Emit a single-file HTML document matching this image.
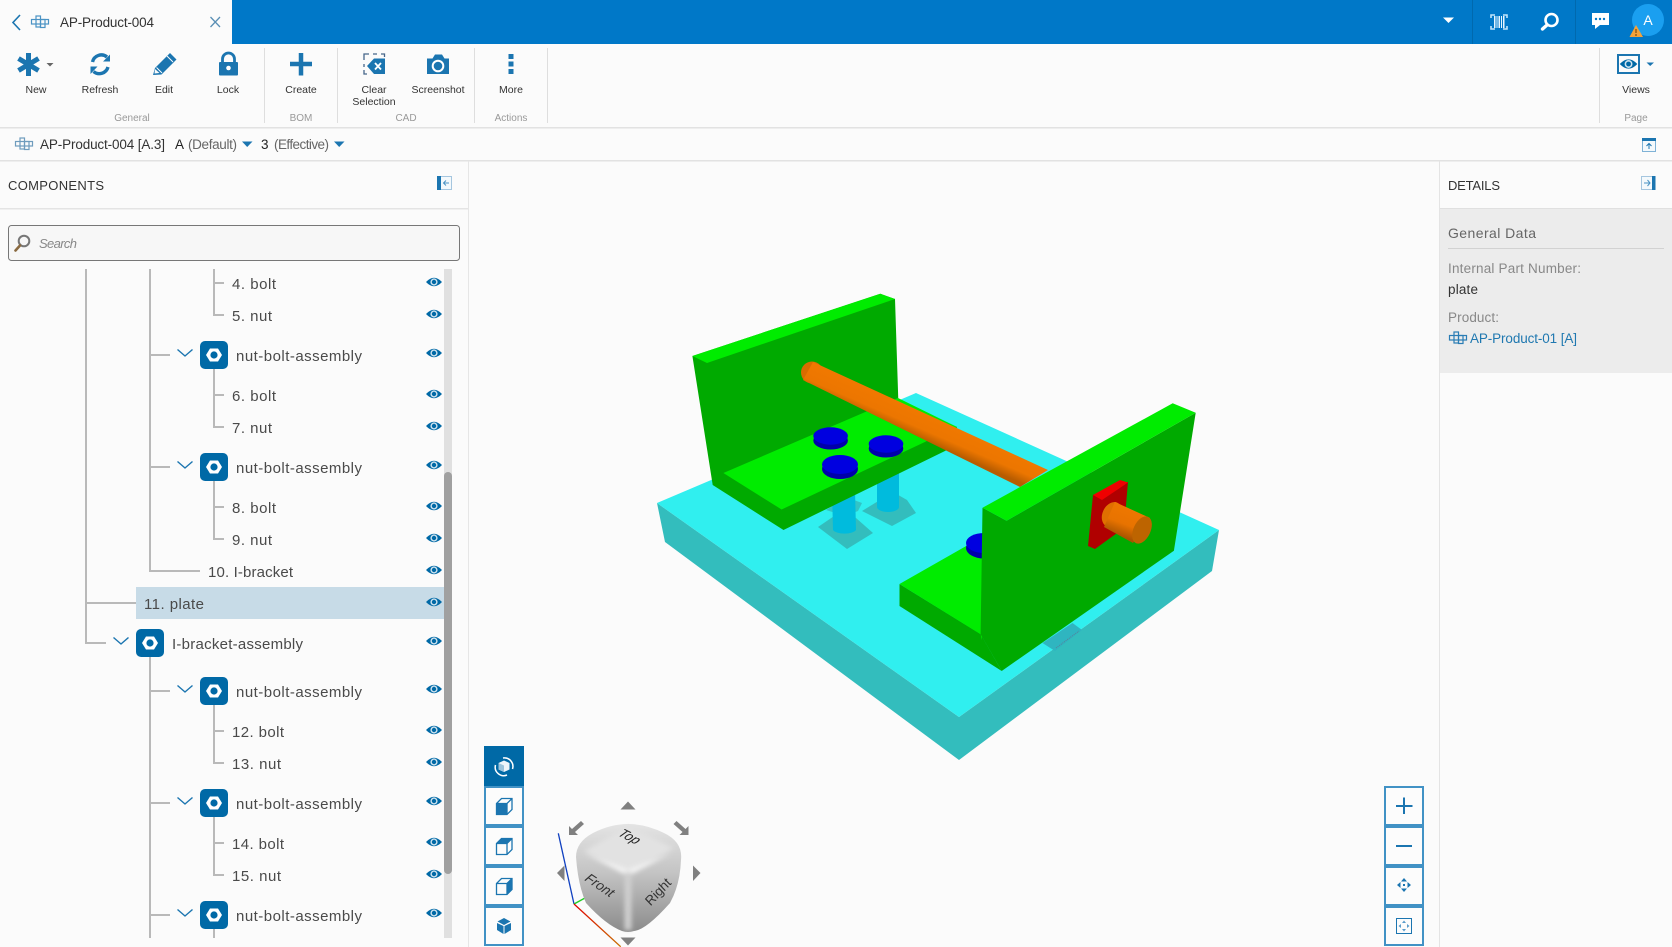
<!DOCTYPE html>
<html><head><meta charset="utf-8"><title>AP-Product-004</title>
<style>
html,body{margin:0;padding:0;width:1672px;height:947px;overflow:hidden;background:#fbfbfb}
svg{display:block}
text{font-family:"Liberation Sans",sans-serif}
.t{font-size:15px;fill:#4a4a4a}
.tb{font-size:10.5px;fill:#333;text-anchor:middle}
.gr{font-size:10px;fill:#999;text-anchor:middle}
.ln{stroke:#b9b9b9;stroke-width:2;fill:none}
.ic{fill:#1b75b0}
.ns{fill:none;stroke:#1b75b0}
.btn{fill:#fcfcfc;stroke:#4192c5;stroke-width:2}
</style></head><body>
<svg width="1672" height="947" viewBox="0 0 1672 947" xmlns="http://www.w3.org/2000/svg">
<defs>
<g id="eye"><path d="M-8 0Q0-8.500 8 0Q0 8.500-8 0Z" fill="#0069a6"/><circle r="3.600" fill="#cfe3ef"/><circle r="2.200" fill="#0069a6"/></g>
<g id="hex"><rect x="-14" y="-14" width="28" height="28" rx="5" fill="#0069a6"/><path d="M-8 0L-4-6.500H4L8 0L4 6.500H-4Z" fill="#fff"/><circle r="3.600" fill="#0069a6"/></g>
<polyline id="chev" points="-7.500,-3.500 0,3 7.500,-3.500" fill="none" stroke="#1b75b0" stroke-width="1.400"/>
<g id="prod" fill="none" stroke-width="1.200"><rect x="-8.500" y="-2.500" width="17" height="4.500"/><rect x="-4" y="-6" width="4.500" height="11"/><rect x="0.500" y="-2.500" width="4.500" height="8"/></g>
<linearGradient id="rod" gradientUnits="userSpaceOnUse" x1="930" y1="416" x2="920" y2="439"><stop offset="0" stop-color="#f07800"/><stop offset=".6" stop-color="#ec7600"/><stop offset="1" stop-color="#b85c00"/></linearGradient>
<linearGradient id="stub" gradientUnits="userSpaceOnUse" x1="1127" y1="508" x2="1117" y2="535"><stop offset="0" stop-color="#ee7700"/><stop offset=".55" stop-color="#e87300"/><stop offset="1" stop-color="#a85400"/></linearGradient>
<linearGradient id="cubeg" x1="0" y1="0" x2="0" y2="1"><stop offset="0" stop-color="#e4e4e4"/><stop offset=".45" stop-color="#c4c4c4"/><stop offset="1" stop-color="#8b8b8b"/></linearGradient>
<linearGradient id="axr" x1="0" y1="0" x2="1" y2="1"><stop offset="0" stop-color="#e00000"/><stop offset="1" stop-color="#c87000"/></linearGradient>
<filter id="bl" x="-20%" y="-20%" width="140%" height="140%"><feGaussianBlur stdDeviation="2.500"/></filter>
</defs>

<rect width="1672" height="947" fill="#fbfbfb"/>

<!-- top bar -->
<rect x="232" width="1440" height="44" fill="#0078c8"/>
<rect x="1472" width="1" height="44" fill="#0069ae"/><rect x="1575" width="1" height="44" fill="#0069ae"/>
<polyline points="20,15 13,22.500 20,30" fill="none" stroke="#1b75b0" stroke-width="1.600"/>
<use href="#prod" x="40" y="22" stroke="#4a93c4"/>
<text x="60" y="27" font-size="13.500" fill="#333" textLength="94">AP-Product-004</text>
<path d="M210.500 17L220 27M220 17L210.500 27" stroke="#5a8fb5" stroke-width="1.300"/>
<path d="M1443 17.500H1454L1448.500 23Z" fill="#fff"/>
<g fill="#e8f6ff"><rect x="1494" y="16" width="1.500" height="12"/><rect x="1496.500" y="16" width="1" height="12"/><rect x="1498.500" y="16" width="1.500" height="12"/><rect x="1501" y="16" width="1" height="12"/><rect x="1503" y="16" width="1.500" height="12"/></g>
<path d="M1495 15H1491V18M1503 15H1507V18M1495 29H1491V26M1503 29H1507V26" fill="none" stroke="#bfe4fa" stroke-width="1.600"/>
<circle cx="1551.500" cy="20" r="6" fill="none" stroke="#fff" stroke-width="2.600"/><path d="M1547 25L1542.500 29" stroke="#fff" stroke-width="3.400" stroke-linecap="round"/>
<path d="M1592 13H1609V25H1600L1595 29V25H1592Z" fill="#fff"/><g fill="#0078c8"><circle cx="1596" cy="19" r="1.200"/><circle cx="1600" cy="19" r="1.200"/><circle cx="1604" cy="19" r="1.200"/></g>
<circle cx="1648" cy="20" r="16" fill="#1a9ff0"/><text x="1648" y="25" font-size="14" fill="#fff" text-anchor="middle">A</text>
<path d="M1636 25L1643 37H1629.500Z" fill="#f5a238"/><path d="M1636 29V33M1636 34V36" stroke="#7a4a10" stroke-width="1.200"/>

<!-- toolbar -->
<g fill="#dedede"><rect x="264" y="48" width="1" height="75"/><rect x="337" y="48" width="1" height="75"/><rect x="474" y="48" width="1" height="75"/><rect x="547" y="48" width="1" height="75"/><rect x="1599" y="48" width="1" height="75"/></g>
<rect y="127" width="1672" height="1.500" fill="#e2e2e2"/><rect y="160" width="1672" height="1.500" fill="#e2e2e2"/>

<g stroke="#1b75b0" stroke-width="5"><path d="M28.500 53V76M18.500 58.500L38.500 70.500M18.500 70.500L38.500 58.500"/></g>
<path d="M46.500 63H53.500L50 66.500Z" fill="#666"/>
<path d="M92.500 62A9 9 0 0 1 107 57M108 67A9 9 0 0 1 93.500 71.500" fill="none" stroke="#1b75b0" stroke-width="3.400"/>
<path d="M103 61.500H110V54.500ZM90.500 66.500H97.500L90.500 74Z" class="ic"/>
<path d="M153 75L155 68L170 53L176.500 59.500L161.500 74.500ZM154.500 73.500L159.500 73L155 69Z" class="ic"/><path d="M156.500 67.500L162 73M167 56L173 62" stroke="#fbfbfb" stroke-width="1"/>
<path d="M222.500 63V59A6 6 0 0 1 234.500 59V63" fill="none" stroke="#1b75b0" stroke-width="2.800"/><rect x="219" y="62" width="19" height="13.500" rx="1" class="ic"/><circle cx="228.500" cy="68" r="2.300" fill="#fff"/>
<path d="M301 53V75.500M290 64H312" stroke="#1b75b0" stroke-width="4.500"/>
<path d="M364 60V54H369M373 54H377M381 54H384.500V57M364 64V67M364 70V74H367" fill="none" stroke="#46668a" stroke-width="1.300"/>
<path d="M367 66L374 58.500H385V74H374Z" class="ic"/><path d="M375 63L381 69.500M381 63L375 69.500" stroke="#fff" stroke-width="1.800"/>
<path d="M427 58.500H432.500L435 54.500H442L444.500 58.500H449V74H427Z" class="ic"/><circle cx="438" cy="66" r="5.300" fill="none" stroke="#fff" stroke-width="2"/>
<g class="ic"><rect x="508.500" y="54" width="5" height="5"/><rect x="508.500" y="61.500" width="5" height="5"/><rect x="508.500" y="69" width="5" height="5"/></g>
<rect x="1618" y="55" width="21" height="18" fill="none" stroke="#1b75b0" stroke-width="2"/><use href="#eye" x="1628.500" y="64" transform="translate(-162.800 -6.400) scale(1.100)"/>
<path d="M1646.500 62.500H1654L1650.200 66Z" fill="#1b75b0"/>

<text x="36" y="93" class="tb">New</text><text x="100" y="93" class="tb">Refresh</text><text x="164" y="93" class="tb">Edit</text><text x="228" y="93" class="tb">Lock</text><text x="301" y="93" class="tb">Create</text><text x="374" y="93" class="tb">Clear</text><text x="374" y="105" class="tb">Selection</text><text x="438" y="93" class="tb">Screenshot</text><text x="511" y="93" class="tb">More</text><text x="1636" y="93" class="tb">Views</text>
<text x="132" y="121" class="gr">General</text><text x="301" y="121" class="gr">BOM</text><text x="406" y="121" class="gr">CAD</text><text x="511" y="121" class="gr">Actions</text><text x="1636" y="121" class="gr">Page</text>

<!-- breadcrumb -->
<use href="#prod" x="24" y="144" stroke="#6f9cbd"/>
<text x="40" y="149" font-size="13.500" fill="#333" textLength="125">AP-Product-004 [A.3]</text>
<text x="175" y="149" font-size="13.500" fill="#222" textLength="9">A</text>
<text x="188" y="149" font-size="13.500" fill="#666" textLength="49">(Default)</text>
<path d="M242 141.500H252.500L247.200 147Z" fill="#1b75b0"/>
<text x="261" y="149" font-size="13.500" fill="#222" textLength="7">3</text>
<text x="274" y="149" font-size="13.500" fill="#666" textLength="55">(Effective)</text>
<path d="M334 141.500H344.500L339.200 147Z" fill="#1b75b0"/>
<rect x="1642.500" y="138.500" width="13" height="13" fill="#f4f9fc" stroke="#7fb2d6"/><rect x="1642" y="138" width="14" height="3" fill="#1b75b0"/><path d="M1649 149V143.500M1646.500 146L1649 143.500L1651.500 146" fill="none" stroke="#1b75b0"/>

<!-- left panel -->
<rect x="468" y="161" width="1" height="786" fill="#e6e6e6"/>
<text x="8" y="190" font-size="13" fill="#333" textLength="96">COMPONENTS</text>
<rect x="437.500" y="176.500" width="14" height="13" fill="#f4f9fc" stroke="#a5c6df"/><rect x="437" y="176" width="4" height="14" fill="#1b75b0"/><path d="M449 183H443.500M446 180.500L443.500 183L446 185.500" fill="none" stroke="#4a93c4"/>
<rect y="208" width="468" height="1.500" fill="#e4e4e4"/>
<rect x="8.500" y="225.500" width="451" height="35" rx="3" fill="#f7f7f7" stroke="#777"/>
<circle cx="24" cy="241" r="5.300" fill="none" stroke="#777" stroke-width="2"/><path d="M20 245.500L15.500 250.500" stroke="#8a6a40" stroke-width="2.600" stroke-linecap="round"/>
<text x="39" y="248" font-size="13" font-style="italic" fill="#888" textLength="38">Search</text>

<!-- scrollbar -->
<rect x="444" y="269" width="8" height="669" fill="#e0e0e0"/><rect x="444" y="472" width="8" height="402" rx="4" fill="#a0a0a0"/>

<!-- selected row -->
<rect x="136" y="587" width="308" height="32" fill="#c7dbe7"/>

<!-- tree lines -->
<path class="ln" d="M86 269V643H106M86 603H136"/>
<path class="ln" d="M150 269V571H200M150 355H170M150 467H170"/>
<path class="ln" d="M150 657V938M150 691H170M150 803H170M150 915H170"/>
<path class="ln" d="M214 269V315H224M214 283H224"/>
<path class="ln" d="M214 369V427H224M214 395H224"/>
<path class="ln" d="M214 481V539H224M214 507H224"/>
<path class="ln" d="M214 705V763H224M214 731H224"/>
<path class="ln" d="M214 817V875H224M214 843H224"/>
<path class="ln" d="M214 929V938"/>

<!-- tree icons -->
<use href="#chev" x="185" y="353"/><use href="#hex" x="214" y="355"/>
<use href="#chev" x="185" y="465"/><use href="#hex" x="214" y="467"/>
<use href="#chev" x="121" y="641"/><use href="#hex" x="150" y="643"/>
<use href="#chev" x="185" y="689"/><use href="#hex" x="214" y="691"/>
<use href="#chev" x="185" y="801"/><use href="#hex" x="214" y="803"/>
<use href="#chev" x="185" y="913"/><use href="#hex" x="214" y="915"/>

<!-- tree labels -->
<text class="t" x="232" y="289" textLength="44">4. bolt</text>
<text class="t" x="232" y="321" textLength="40">5. nut</text>
<text class="t" x="236" y="361" textLength="126">nut-bolt-assembly</text>
<text class="t" x="232" y="401" textLength="44">6. bolt</text>
<text class="t" x="232" y="433" textLength="40">7. nut</text>
<text class="t" x="236" y="473" textLength="126">nut-bolt-assembly</text>
<text class="t" x="232" y="513" textLength="44">8. bolt</text>
<text class="t" x="232" y="545" textLength="40">9. nut</text>
<text class="t" x="208" y="577" textLength="85">10. I-bracket</text>
<text class="t" x="144" y="609" textLength="60">11. plate</text>
<text class="t" x="172" y="649" textLength="131">I-bracket-assembly</text>
<text class="t" x="236" y="697" textLength="126">nut-bolt-assembly</text>
<text class="t" x="232" y="737" textLength="52">12. bolt</text>
<text class="t" x="232" y="769" textLength="49">13. nut</text>
<text class="t" x="236" y="809" textLength="126">nut-bolt-assembly</text>
<text class="t" x="232" y="849" textLength="52">14. bolt</text>
<text class="t" x="232" y="881" textLength="49">15. nut</text>
<text class="t" x="236" y="921" textLength="126">nut-bolt-assembly</text>

<!-- eyes -->
<use href="#eye" x="434" y="282"/><use href="#eye" x="434" y="314"/><use href="#eye" x="434" y="353"/><use href="#eye" x="434" y="394"/><use href="#eye" x="434" y="426"/><use href="#eye" x="434" y="465"/><use href="#eye" x="434" y="506"/><use href="#eye" x="434" y="538"/><use href="#eye" x="434" y="570"/><use href="#eye" x="434" y="602"/><use href="#eye" x="434" y="641"/><use href="#eye" x="434" y="689"/><use href="#eye" x="434" y="730"/><use href="#eye" x="434" y="762"/><use href="#eye" x="434" y="801"/><use href="#eye" x="434" y="842"/><use href="#eye" x="434" y="874"/><use href="#eye" x="434" y="913"/>

<!-- right panel -->
<rect x="1439" y="161" width="1" height="786" fill="#e4e4e4"/>
<text x="1448" y="190" font-size="13" fill="#333" textLength="52">DETAILS</text>
<rect x="1641.500" y="176.500" width="13" height="13" fill="#f4f9fc" stroke="#a5c6df"/><rect x="1652" y="176" width="3.500" height="14" fill="#1b75b0"/><path d="M1644 183H1650M1647.500 180L1650 183L1647.500 186" fill="none" stroke="#4a93c4"/>
<rect x="1440" y="208" width="232" height="165" fill="#ececec"/><rect x="1440" y="208" width="232" height="1" fill="#e0e0e0"/>
<text x="1448" y="238" font-size="14" fill="#666" textLength="88">General Data</text>
<rect x="1448" y="248" width="216" height="1" fill="#d2d2d2"/>
<text x="1448" y="273" font-size="13.500" fill="#888" textLength="133">Internal Part Number:</text>
<text x="1448" y="294" font-size="13.500" fill="#333" textLength="30">plate</text>
<text x="1448" y="322" font-size="13.500" fill="#888" textLength="51">Product:</text>
<use href="#prod" x="1458" y="338" stroke="#2a7db5"/>
<text x="1470" y="343" font-size="13.500" fill="#1f78b0" textLength="107">AP-Product-01 [A]</text>

<!-- 3D model -->
<polygon points="657,503 665,542 959,760 1212,571 1219,530 959,717" fill="#33bdbd"/>
<polygon points="657,503 916,393 1219,530 959,717" fill="#30efef"/>
<polygon points="1072.500,623 1082,630 1055,651 1042.500,643" fill="#2fb5c0"/>
<path d="M1056 648L1079 631" stroke="#5a7f9a" stroke-width="1" stroke-dasharray="1 1"/>

<!-- plates and bolts below left bracket -->
<polygon points="826,510 846,497 862,503 858,511 845,516" fill="#33c4c6"/>
<polygon points="818,527 843,510 856,518 873,533 847,549" fill="#33bdbd"/>
<polygon points="862,511 893,492 907,500 916,513 892,526" fill="#33bdbd"/>
<path d="M832 490H855L856 530A12 5 0 0 1 833 530Z" fill="#00bbdd"/>
<path d="M877 470H899L899 507A11 5 0 0 1 877 507Z" fill="#00bbdd"/>

<!-- left bracket -->
<polygon points="692.400,356 880.300,293.700 895,299 898.300,400 957,427 947,450 783.500,530 712.700,485" fill="#00aa00"/>
<polygon points="692.400,356 880.300,293.700 895,299 707,363" fill="#00ec00"/>
<polygon points="723.400,473 898,398 957,427 927,441 781.600,509.500" fill="#00ec00"/>
<g>
<ellipse cx="830.600" cy="440.500" rx="17.300" ry="9" fill="#0000aa"/><ellipse cx="830.600" cy="436" rx="17.300" ry="8.700" fill="#0000e0"/>
<ellipse cx="886" cy="448.500" rx="17.300" ry="9" fill="#0000aa"/><ellipse cx="886" cy="444" rx="17.300" ry="8.700" fill="#0000e0"/>
<ellipse cx="840" cy="469" rx="18" ry="10" fill="#0000aa"/><ellipse cx="840" cy="464.500" rx="18" ry="9.500" fill="#0000e0"/>
</g>

<!-- long rod -->
<ellipse cx="812" cy="372.500" rx="11" ry="11" fill="#d96c00"/>
<polygon points="813,362 1048,470 1020,487 803,380" fill="url(#rod)"/>

<!-- right bracket -->
<polygon points="899.500,584 899.500,606 1001.700,671 980.600,634" fill="#00aa00"/>
<polygon points="899.500,584 982,537 982,640 980.600,634.300" fill="#00ec00"/>
<ellipse cx="984" cy="548" rx="18" ry="10.500" fill="#0000aa"/>
<ellipse cx="984" cy="543" rx="18" ry="10" fill="#0000e0"/>
<polygon points="982.500,507.700 1006.600,520.700 1195.700,412.700 1173.900,550.700 1001.700,671 980.600,634.300" fill="#00aa00"/>
<polygon points="982.500,507.700 1172.700,403.300 1195.700,412.700 1006.600,520.700" fill="#00ec00"/>

<!-- red square and stub -->
<polygon points="1093,495 1128,482 1124,528 1095,549 1088,546" fill="#b00000"/>
<polygon points="1093,495 1120,480 1128,482.500 1102,500" fill="#f00000"/>
<ellipse cx="1112" cy="514.500" rx="9.500" ry="13" transform="rotate(25 1112 514.500)" fill="#e07000"/>
<polygon points="1115,502 1150,518 1133,543 1104,527" fill="url(#stub)"/>
<ellipse cx="1142" cy="530" rx="8.500" ry="14.500" transform="rotate(25 1142 530)" fill="#bd6400"/>

<!-- nav buttons -->
<rect x="484" y="746" width="40" height="40" fill="#0069a6"/>
<rect class="btn" x="485" y="787" width="38" height="38"/><rect class="btn" x="485" y="827" width="38" height="38"/><rect class="btn" x="485" y="867" width="38" height="38"/><rect class="btn" x="485" y="907" width="38" height="38"/>
<path d="M503 758A8.500 8.500 0 0 1 512.500 769M495.500 765A8.500 8.500 0 0 0 507 775" fill="none" stroke="#fff" stroke-width="1.500"/>
<path d="M504 760.500L509.500 763V769.500L504 772L498.500 769.500V763Z" fill="#eef5fa"/><path d="M498.500 763L504 765.500V772L498.500 769.500Z" fill="#9cc4dc"/>

<g fill="none" stroke="#1b75b0" stroke-width="1.300">
<path d="M496.500 803.500V814.500H507L512 809.500V798.500H501.500ZM496.500 803.500H507L512 798.500M507 803.500V814.500"/>
<path d="M496.500 843.500V854.500H507L512 849.500V838.500H501.500ZM496.500 843.500H507L512 838.500M507 843.500V854.500"/>
<path d="M496.500 883.500V894.500H507L512 889.500V878.500H501.500ZM496.500 883.500H507L512 878.500M507 883.500V894.500"/>
</g>
<rect x="496.500" y="803.500" width="10.500" height="11" class="ic"/>
<path d="M496.500 843.500L501.500 838.500H512L507 843.500Z" class="ic"/>
<path d="M507 883.500L512 878.500V889.500L507 894.500Z" class="ic"/>
<path d="M504.500 926L511 923V930L504.500 934ZM503.500 926L497 923V930L503.500 934ZM504 918L510.500 921.500L504 925L497.500 921.500Z" class="ic"/>

<!-- cube -->
<path d="M558.300 833.300L574 904" stroke="#1040c0" stroke-width="1.300" fill="none"/>
<path d="M574 904L585 898" stroke="#20d020" stroke-width="1.300" fill="none"/>
<path d="M574 904L620.700 946.700" stroke="url(#axr)" stroke-width="1.300" fill="none"/>
<path d="M593 833Q628 815 664 833Q683 842 681 860Q680 885 670 903Q646 930 634 931Q628 933 622 931Q606 925 586 903Q578 885 576 857Q576 842 593 833Z" fill="url(#cubeg)"/>
<g filter="url(#bl)"><path d="M628 826L674 848L630 872L584 851Z" fill="#e2e2e2"/><path d="M584 853L628 876L672 853L628 870Z" fill="#f4f4f4"/><path d="M628 872V930" stroke="#cfcfcf" stroke-width="7"/></g>
<text font-size="13" font-style="italic" fill="#222" transform="translate(617 835) rotate(27) skewX(-18)">Top</text>
<text font-size="13.500" font-style="italic" fill="#333" transform="translate(584 880) rotate(38) skewY(-4)">Front</text>
<text font-size="13.500" font-style="italic" fill="#333" transform="translate(651 906) rotate(-47) skewX(8)">Right</text>
<g fill="#808080">
<path d="M620.500 809.500L628 801.500L635.500 809.500Z"/><path d="M620.500 937.500L628 945.500L635.500 937.500Z"/>
<path d="M564.500 865.500V881L557 873Z"/><path d="M693 865.500V881L700.500 873Z"/>
<path d="M569 835V826L572 829L581 821L584 824L575 832L578 835Z"/>
<path d="M688.500 835V826L685.500 829L676.500 821L673.500 824L682.500 832L679.500 835Z"/>
</g>

<!-- zoom buttons -->
<rect class="btn" x="1385" y="787" width="38" height="38"/><rect class="btn" x="1385" y="827" width="38" height="38"/><rect class="btn" x="1385" y="867" width="38" height="38"/><rect class="btn" x="1385" y="907" width="38" height="38"/>
<path d="M1404 797.500V814M1396 806H1412.500M1396 846H1412" stroke="#1b75b0" stroke-width="2"/>
<g class="ic"><path d="M1404 878L1407 881.500H1401ZM1404 892L1407 888.500H1401ZM1397 885L1400.500 882V888ZM1411 885L1407.500 882V888Z"/><rect x="1403" y="884" width="2" height="2"/></g>
<rect x="1396.500" y="918.500" width="15" height="15" fill="none" stroke="#1b75b0"/>
<g fill="#5a9ccb"><path d="M1404 920.500L1406 923H1402ZM1404 931.500L1406 929H1402ZM1398.500 926L1401 924V928ZM1409.500 926L1407 924V928Z"/></g>
</svg>
</body></html>
